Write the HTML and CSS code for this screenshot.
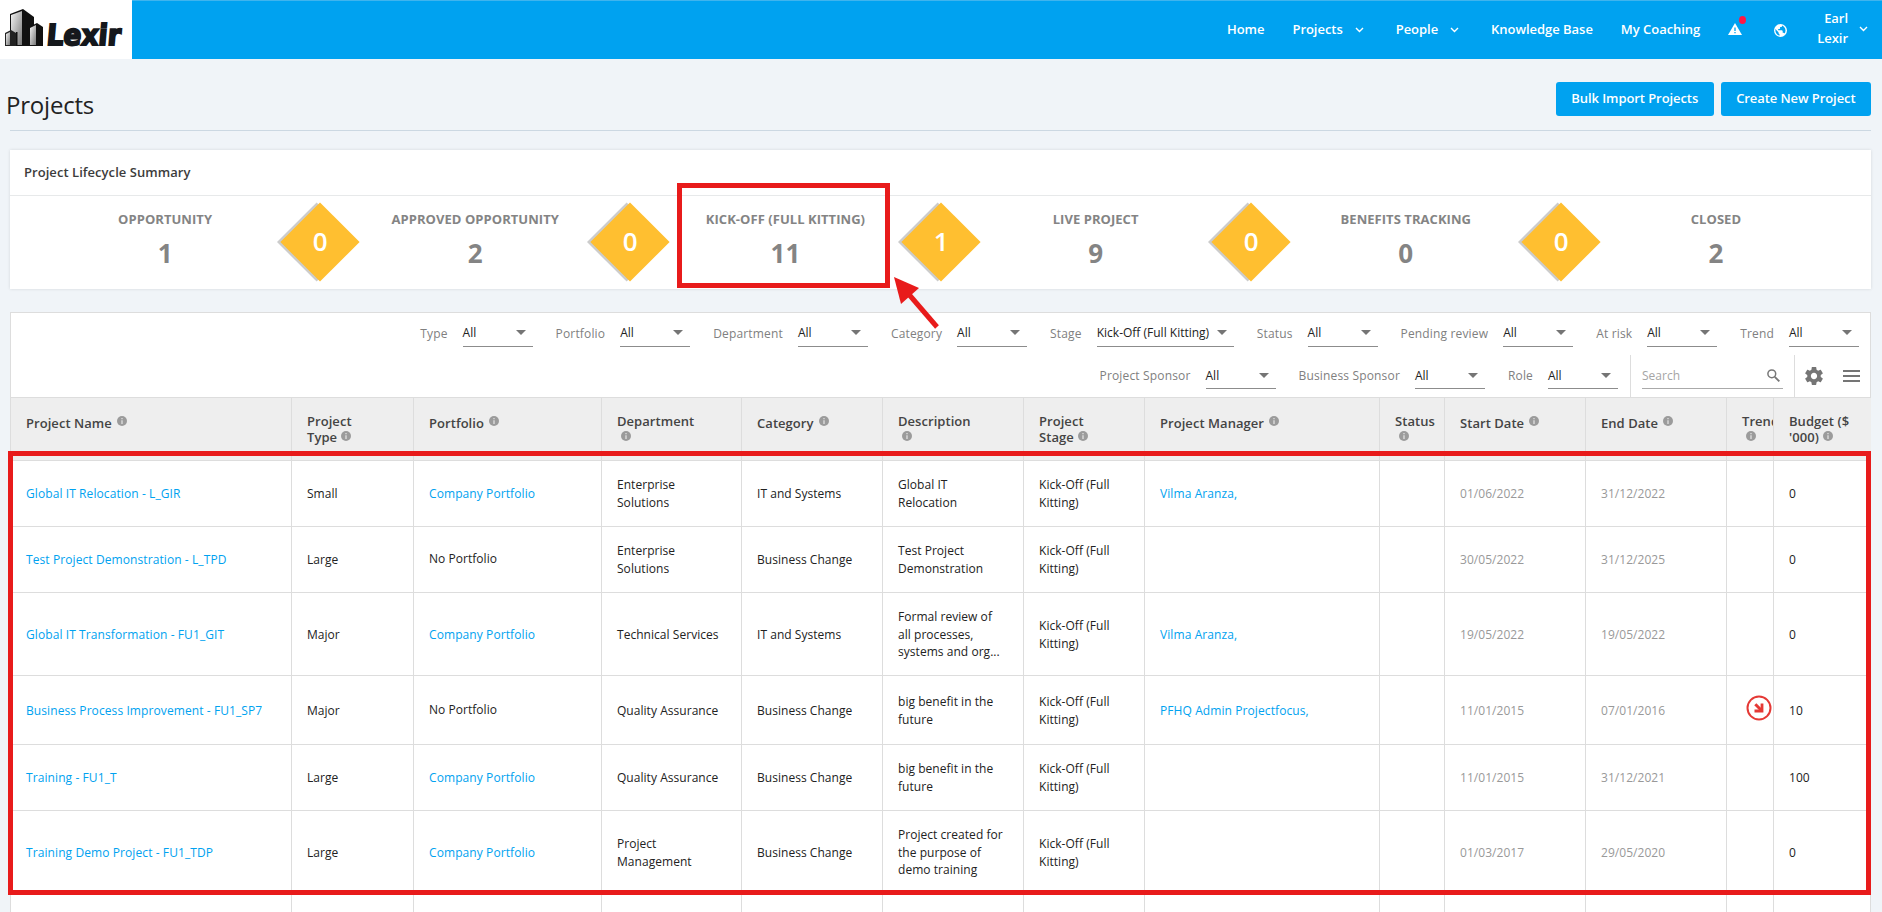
FILE: index.html
```html
<!DOCTYPE html>
<html lang="en">
<head>
    <meta charset="UTF-8">
    <meta name="viewport" content="width=device-width, initial-scale=1.0">
    <title>Projects</title>
    <link rel="stylesheet" href="styles.css">
</head>
<body>
    <!-- shared icons -->
    <svg class="defs" width="0" height="0">
        <symbol id="info" viewBox="0 0 10 10">
            <circle cx="5" cy="5" r="5" fill="#9b9b9b"/>
            <path d="M5 2v1.3M5 4.3v3.6" stroke="#e6e6e6" stroke-width="1.2"/>
        </symbol>
        <symbol id="chevron" viewBox="0 0 9 6">
            <path d="M1 1l3.5 3.5L8 1" fill="none" stroke="#fff" stroke-width="1.4"/>
        </symbol>
    </svg>

    <header class="topbar">
        <a class="logo" href="#">
            <svg width="132" height="59" viewBox="0 0 132 59">
                <defs>
                    <linearGradient id="steel" x1="0" y1="0" x2="1" y2="1">
                        <stop offset="0" stop-color="#f4f4f4"/>
                        <stop offset="1" stop-color="#777"/>
                    </linearGradient>
                </defs>
                <path d="M23 9l11 8v29H10V14z" fill="#111"/>
                <path d="M11 15l11-4v34H11z" fill="url(#steel)"/>
                <path d="M5 33l6-3 5 3v13H5z" fill="#222"/>
                <path d="M6 34l4-2v13H6z" fill="url(#steel)"/>
                <path d="M29 27l8-4 6 4v19H29z" fill="#111"/>
                <path d="M30 28l6-3v20h-6z" fill="url(#steel)"/>
                <path d="M16 32l1.500 0v13h-1.500zM26 24h1.500v21h-1.500z" fill="#111"/>
                <text class="logo-text" transform="translate(46 45) skewX(-5)" textLength="74" lengthAdjust="spacingAndGlyphs">Lexir</text>
            </svg>
        </a>
        <nav class="nav">
            <a href="#">Home</a>
            <a href="#">Projects<svg class="chev" width="9" height="6"><use href="#chevron"/></svg></a>
            <a href="#">People<svg class="chev" width="9" height="6"><use href="#chevron"/></svg></a>
            <a href="#">Knowledge Base</a>
            <a href="#">My Coaching</a>
            <a class="alert" href="#">
                <svg width="14" height="12" viewBox="0 0 14 12"><path d="M7 0l7 12H0z" fill="#fff"/><path d="M7 4.500v3.500M7 9v1.300" stroke="#00a2f0" stroke-width="1.300"/></svg>
                <span class="dot"></span>
            </a>
            <a class="globe" href="#">
                <svg width="13" height="13" viewBox="0 0 13 13"><circle cx="6.500" cy="6.500" r="6.500" fill="#fff"/><path d="M1.300 5l3.200 3.200v1l1 1v1.500C3 11.300 1.100 9 1.300 5zM8 1.500c2 .8 3.500 2.600 3.500 5 0 1.200-.4 2.300-1 3.100-.2-.5-.6-.8-1.200-.8h-.6V6.900L8 6.200H4.200V5h1.300l.6-.6V3.100h1.200L8 2.400z" fill="#00a2f0"/></svg>
            </a>
            <a class="user" href="#"><span>Earl<br>Lexir</span><svg width="9" height="6"><use href="#chevron"/></svg></a>
        </nav>
    </header>

    <main>
        <div class="page-head">
            <h1>Projects</h1>
            <div class="actions">
                <button>Bulk Import Projects</button>
                <button>Create New Project</button>
            </div>
        </div>

        <section class="summary">
            <h2>Project Lifecycle Summary</h2>
            <div class="stages">
                <div class="stage"><span class="name">Opportunity</span><span class="count">1</span><div class="gate"><span>0</span></div></div>
                <div class="stage"><span class="name">Approved Opportunity</span><span class="count">2</span><div class="gate"><span>0</span></div></div>
                <div class="stage"><span class="name">Kick-Off (Full Kitting)</span><span class="count">11</span><div class="gate"><span>1</span></div></div>
                <div class="stage"><span class="name">Live Project</span><span class="count">9</span><div class="gate"><span>0</span></div></div>
                <div class="stage"><span class="name">Benefits Tracking</span><span class="count">0</span><div class="gate"><span>0</span></div></div>
                <div class="stage"><span class="name">Closed</span><span class="count">2</span></div>
            </div>
        </section>

        <section class="grid">
            <div class="filters">
                <div class="filter"><label>Type</label><div class="select">All</div></div>
                <div class="filter"><label>Portfolio</label><div class="select">All</div></div>
                <div class="filter"><label>Department</label><div class="select">All</div></div>
                <div class="filter"><label>Category</label><div class="select">All</div></div>
                <div class="filter"><label>Stage</label><div class="select wide">Kick-Off (Full Kitting)</div></div>
                <div class="filter"><label>Status</label><div class="select">All</div></div>
                <div class="filter"><label>Pending review</label><div class="select">All</div></div>
                <div class="filter"><label>At risk</label><div class="select">All</div></div>
                <div class="filter"><label>Trend</label><div class="select">All</div></div>
            </div>
            <div class="filters second">
                <div class="filter"><label>Project Sponsor</label><div class="select">All</div></div>
                <div class="filter"><label>Business Sponsor</label><div class="select">All</div></div>
                <div class="filter"><label>Role</label><div class="select">All</div></div>
                <div class="search">
                    <div class="search-box">Search
                        <svg width="13" height="13" viewBox="0 0 13 13" fill="none" stroke="#777"><circle cx="4.800" cy="4.800" r="3.900" stroke-width="1.500"/><path d="M7.800 7.800l4.500 4.500" stroke-width="1.900"/></svg>
                    </div>
                </div>
                <div class="tools">
                    <svg width="18" height="18" viewBox="2 2 20 20"><path fill="#757575" d="M19.430 12.980c.04-.32.07-.64.07-.98s-.03-.66-.07-.98l2.110-1.650c.19-.15.24-.42.12-.64l-2-3.460c-.12-.22-.39-.3-.61-.22l-2.490 1c-.52-.4-1.080-.73-1.690-.98l-.38-2.650C14.460 2.180 14.250 2 14 2h-4c-.25 0-.46.18-.49.42l-.38 2.650c-.61.25-1.170.59-1.690.98l-2.490-1c-.23-.09-.49 0-.61.22l-2 3.460c-.13.22-.07.49.12.64l2.110 1.650c-.04.32-.07.65-.07.98s.03.66.07.98l-2.110 1.650c-.19.15-.24.42-.12.64l2 3.460c.12.22.39.3.61.22l2.490-1c.52.4 1.080.73 1.690.98l.38 2.650c.03.24.24.42.49.42h4c.25 0 .46-.18.49-.42l.38-2.650c.61-.25 1.170-.59 1.690-.98l2.490 1c.23.09.49 0 .61-.22l2-3.460c.12-.22.07-.49-.12-.64l-2.110-1.650zM12 15.500c-1.930 0-3.500-1.570-3.500-3.500s1.570-3.500 3.500-3.500 3.500 1.570 3.500 3.500-1.570 3.500-3.500 3.500z"/></svg>
                    <svg width="17" height="12" viewBox="0 0 17 12"><path d="M0 1h17M0 6h17M0 11h17" stroke="#757575" stroke-width="2"/></svg>
                </div>
            </div>

            <table>
                <colgroup>
                    <col class="c-name"><col class="c-type"><col class="c-port"><col class="c-dept"><col class="c-cat"><col class="c-desc"><col class="c-stage"><col class="c-pm"><col class="c-status"><col class="c-date"><col class="c-date"><col class="c-trend"><col class="c-budget">
                </colgroup>
                <thead>
                    <tr>
                        <th class="one">Project Name<svg><use href="#info"/></svg></th>
                        <th>Project<br>Type<svg><use href="#info"/></svg></th>
                        <th class="one">Portfolio<svg><use href="#info"/></svg></th>
                        <th>Department<br><svg><use href="#info"/></svg></th>
                        <th class="one">Category<svg><use href="#info"/></svg></th>
                        <th>Description<br><svg><use href="#info"/></svg></th>
                        <th>Project<br>Stage<svg><use href="#info"/></svg></th>
                        <th class="one">Project Manager<svg><use href="#info"/></svg></th>
                        <th>Status<br><svg><use href="#info"/></svg></th>
                        <th class="one">Start Date<svg><use href="#info"/></svg></th>
                        <th class="one">End Date<svg><use href="#info"/></svg></th>
                        <th>Trend<br><svg><use href="#info"/></svg></th>
                        <th>Budget ($<br>'000)<svg><use href="#info"/></svg></th>
                    </tr>
                </thead>
                <tbody>
                    <tr>
                        <td><a href="#">Global IT Relocation - L_GIR</a></td><td>Small</td><td><a href="#">Company Portfolio</a></td><td>Enterprise Solutions</td><td>IT and Systems</td><td class="desc">Global IT Relocation</td><td>Kick-Off (Full Kitting)</td><td><a href="#">Vilma Aranza,</a></td><td></td><td class="date">01/06/2022</td><td class="date">31/12/2022</td><td></td><td>0</td>
                    </tr>
                    <tr>
                        <td><a href="#">Test Project Demonstration - L_TPD</a></td><td>Large</td><td class="none">No Portfolio</td><td>Enterprise Solutions</td><td>Business Change</td><td class="desc">Test Project Demonstration</td><td>Kick-Off (Full Kitting)</td><td></td><td></td><td class="date">30/05/2022</td><td class="date">31/12/2025</td><td></td><td>0</td>
                    </tr>
                    <tr class="tall">
                        <td><a href="#">Global IT Transformation - FU1_GIT</a></td><td>Major</td><td><a href="#">Company Portfolio</a></td><td>Technical Services</td><td>IT and Systems</td><td class="desc">Formal review of all processes, systems and org...</td><td>Kick-Off (Full Kitting)</td><td><a href="#">Vilma Aranza,</a></td><td></td><td class="date">19/05/2022</td><td class="date">19/05/2022</td><td></td><td>0</td>
                    </tr>
                    <tr class="mid">
                        <td><a href="#">Business Process Improvement - FU1_SP7</a></td><td>Major</td><td class="none">No Portfolio</td><td>Quality Assurance</td><td>Business Change</td><td class="desc">big benefit in the future</td><td>Kick-Off (Full Kitting)</td><td><a href="#">PFHQ Admin Projectfocus,</a></td><td></td><td class="date">11/01/2015</td><td class="date">07/01/2016</td>
                        <td class="trend"><svg width="26" height="26" viewBox="0 0 26 26" fill="none" stroke="#e53935"><circle cx="13" cy="13" r="11.500" stroke-width="2"/><path d="M9.300 9.300l6 6" stroke-width="3"/><path d="M16 8.500V16H8.500" stroke-width="2.800"/></svg></td><td>10</td>
                    </tr>
                    <tr>
                        <td><a href="#">Training - FU1_T</a></td><td>Large</td><td><a href="#">Company Portfolio</a></td><td>Quality Assurance</td><td>Business Change</td><td class="desc">big benefit in the future</td><td>Kick-Off (Full Kitting)</td><td></td><td></td><td class="date">11/01/2015</td><td class="date">31/12/2021</td><td></td><td>100</td>
                    </tr>
                    <tr class="tall">
                        <td><a href="#">Training Demo Project - FU1_TDP</a></td><td>Large</td><td><a href="#">Company Portfolio</a></td><td>Project Management</td><td>Business Change</td><td class="desc">Project created for the purpose of demo training</td><td>Kick-Off (Full Kitting)</td><td></td><td></td><td class="date">01/03/2017</td><td class="date">29/05/2020</td><td></td><td>0</td>
                    </tr>
                    <tr class="rest">
                        <td></td><td></td><td></td><td></td><td></td><td></td><td></td><td></td><td></td><td></td><td></td><td></td><td></td>
                    </tr>
                </tbody>
            </table>
        </section>
    </main>

    <!-- callouts -->
    <div class="callout stage-callout"></div>
    <div class="callout rows-callout"></div>
    <svg class="arrow" width="50" height="56" viewBox="0 0 50 56">
        <path d="M16 16l31 36" stroke="#e81b1b" stroke-width="5"/>
        <path d="M4 2l25 11L11 29z" fill="#e81b1b"/>
    </svg>
</body>
</html>
```

FILE: styles.css
```css
* {
  box-sizing: border-box;
}

body {
  margin: 0;
  height: 912px;
  overflow: hidden;
  position: relative;
  background-color: #f0f4f8;
  font-family: "Open Sans", "Noto Sans", sans-serif;
  font-size: 12px;
  color: #222;
}

a {
  color: #00a2f0;
  text-decoration: none;
}

.defs {
  display: block;
}

/* top bar */
.topbar {
  display: flex;
  justify-content: space-between;
  height: 59px;
  background-color: #00a2f0;
  border-top: 1px solid #3fb4ee;
}

.logo {
  width: 132px;
  height: 59px;
  margin-top: -1px;
  background-color: white;
}

.logo svg {
  display: block;
}

.logo-text {
  font-family: "DejaVu Sans", sans-serif;
  font-weight: bold;
  font-size: 29px;
  fill: #15181c;
  stroke: #15181c;
  stroke-width: 2px;
}

.nav {
  display: flex;
  align-items: center;
  padding: 0 14px 2px 0;
}

.nav a {
  display: flex;
  align-items: center;
  margin-right: 28px;
  color: white;
  font-size: 13px;
  font-weight: 600;
  letter-spacing: -0.04px;
}

.nav .chev {
  margin: 1px 4px 0 12px;
}

.nav .alert {
  position: relative;
  margin-right: 32px;
}

.alert .dot {
  position: absolute;
  top: -7px;
  right: -4px;
  width: 7px;
  height: 8px;
  border-radius: 50%;
  background-color: #ff1744;
}

.nav .globe {
  margin: 3px 30px 0 0;
}

.nav .user {
  margin: -2px 0 0;
  line-height: 20px;
  text-align: right;
}

.user svg {
  margin: 2px 0 0 11px;
}

/* page heading */
main {
  padding: 0 11px 0 10px;
}

.page-head {
  display: flex;
  justify-content: space-between;
  height: 72px;
  border-bottom: 1px solid #ccd8e2;
}

h1 {
  margin: 29px 0 0 -4px;
  font-size: 24px;
  line-height: 34px;
  font-weight: 400;
  letter-spacing: -0.2px;
}

.actions {
  display: flex;
  gap: 7px;
  padding-top: 23px;
}

.actions button {
  height: 34px;
  padding: 0 15.5px 2px;
  border: 0;
  border-radius: 3px;
  background-color: #00a2f0;
  color: white;
  font-family: inherit;
  font-size: 13px;
  font-weight: 600;
  letter-spacing: -0.08px;
}

/* lifecycle summary */
.summary {
  height: 139px;
  margin-top: 19px;
  background-color: white;
  box-shadow: 0 0 3px rgba(0, 0, 0, 0.12);
}

.summary h2 {
  height: 46px;
  margin: 0;
  padding-left: 14px;
  border-bottom: 1px solid #e7e9ea;
  font-size: 13px;
  font-weight: 600;
  line-height: 45px;
  letter-spacing: 0.05px;
  color: #3c3c3c;
}

.stages {
  display: flex;
}

.stage {
  position: relative;
  flex: 1;
  display: flex;
  flex-direction: column;
  align-items: center;
  height: 93px;
  padding-top: 14px;
  color: #848484;
  font-weight: 700;
}

.stage .name {
  font-size: 13px;
  line-height: 18px;
  letter-spacing: 0.05px;
  text-transform: uppercase;
}

.stage .count {
  margin-top: 7px;
  font-size: 26px;
  line-height: 36px;
}

.gate {
  position: absolute;
  z-index: 1;
  top: 18px;
  right: -28px;
  width: 56px;
  height: 56px;
  display: flex;
  align-items: center;
  justify-content: center;
  transform: rotate(45deg);
  background-color: #ffbf30;
  box-shadow: -2.4px 2.4px 0 #ccc;
}

.gate span {
  padding-bottom: 2px;
  transform: rotate(-45deg);
  color: white;
  font-size: 26px;
  font-weight: 600;
}

/* project grid */
.grid {
  margin-top: 23px;
  border: 1px solid #ddd;
  border-bottom: 0;
  background-color: white;
}

.filters {
  display: flex;
  justify-content: flex-end;
  gap: 23px;
  height: 42px;
  padding: 8px 11px 0 0;
}

.filters.second {
  padding-top: 0;
  padding-right: 10px;
}

.filter {
  display: flex;
  gap: 15px;
}

.filter label {
  color: #808080;
  font-size: 12px;
  line-height: 26px;
  letter-spacing: 0.16px;
}

.select {
  display: flex;
  justify-content: space-between;
  align-items: center;
  width: 70px;
  height: 26px;
  padding: 0 7px 3px 0;
  border-bottom: 1px solid #8c8c8c;
  white-space: nowrap;
}

.select::after {
  content: "";
  border: 5px solid transparent;
  border-top-color: #757575;
  border-bottom: 0;
}

.select.wide {
  width: 137px;
}

.second .filter {
  padding-top: 8px;
}

.second .select {
  padding-bottom: 1px;
}

.search {
  height: 42px;
  margin-left: -11px;
  padding: 8px 11px 0 11px;
  border-left: 1px solid #ddd;
  border-right: 1px solid #ddd;
}

.search-box {
  display: flex;
  justify-content: space-between;
  align-items: center;
  width: 141px;
  height: 26px;
  padding: 0 3px 0 0;
  border-bottom: 1px solid #aaa;
  color: #a5a5a5;
}

.tools {
  display: flex;
  align-items: center;
  gap: 20px;
  margin-left: -13px;
}

table {
  width: 1860px;
  border-collapse: separate;
  border-spacing: 0;
  table-layout: fixed;
}

.c-name { width: 281px; }
.c-type { width: 122px; }
.c-port { width: 188px; }
.c-dept { width: 140px; }
.c-cat { width: 141px; }
.c-desc { width: 141px; }
.c-stage { width: 121px; }
.c-pm { width: 235px; }
.c-status { width: 65px; }
.c-date { width: 141px; }
.c-trend { width: 47px; }
.c-budget { width: 97px; }

th, td {
  padding: 0 15px;
  border-right: 1px solid #ddd;
  border-bottom: 1px solid #ddd;
  text-align: left;
}

th:last-child, td:last-child {
  border-right: 0;
}

th {
  height: 64px;
  padding-top: 15px;
  padding-right: 0;
  overflow: hidden;
  border-top: 1px solid #ddd;
  background-color: #eee;
  vertical-align: top;
  white-space: nowrap;
  font-size: 13px;
  font-weight: 600;
  line-height: 16px;
  letter-spacing: 0.05px;
  color: #444;
}

th.one {
  padding-top: 17px;
}

th svg {
  width: 10px;
  height: 10px;
  margin-left: 4px;
  vertical-align: 1px;
}

th.one svg {
  margin-left: 5px;
  vertical-align: 2px;
}

td {
  height: 66px;
  line-height: 17.6px;
  letter-spacing: 0.04px;
}

td a {
  letter-spacing: 0.09px;
}

td.desc {
  padding-right: 18px;
}

.tall td {
  height: 83px;
  padding-top: 1px;
}

.mid td {
  height: 69px;
  padding-top: 2px;
}

td.none {
  padding-bottom: 2px;
}

td.date {
  color: #999;
}

.mid td.trend {
  padding: 0 0 4px 19px;
}

.trend svg {
  display: block;
}

.rest td {
  height: 19px;
  border-bottom: 0;
}

/* callouts over the page */
.callout {
  position: absolute;
  z-index: 2;
  border: 5px solid #e81b1b;
}

.stage-callout {
  left: 677px;
  top: 183px;
  width: 213px;
  height: 105px;
}

.rows-callout {
  left: 8px;
  top: 451px;
  width: 1863px;
  height: 444px;
}

.arrow {
  position: absolute;
  z-index: 2;
  left: 890px;
  top: 275px;
}
```
